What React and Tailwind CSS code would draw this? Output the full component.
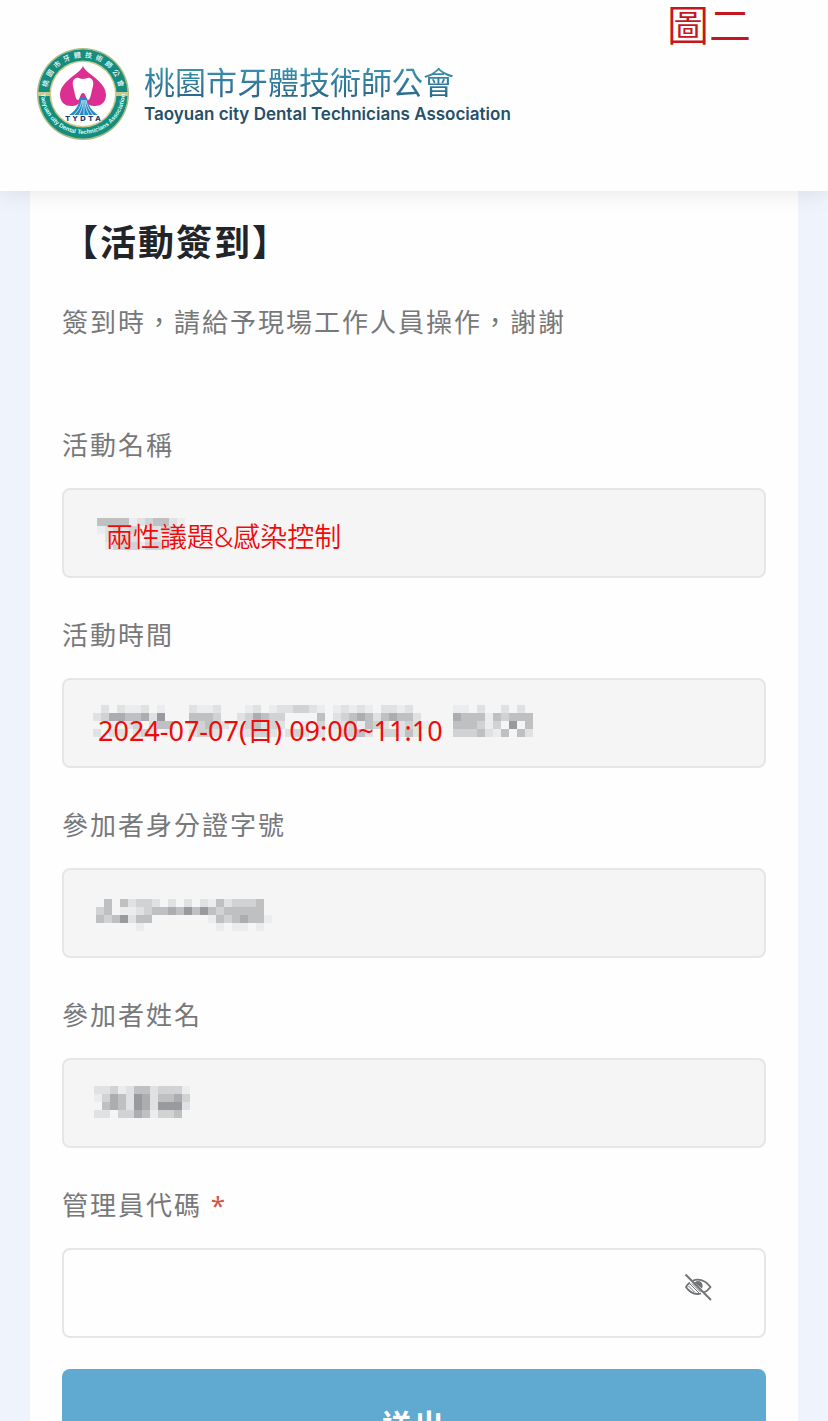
import { useId, useState } from 'react'

const fieldBox = 'relative flex h-[90px] w-full overflow-hidden rounded-lg border-2 border-[#e6e6e6]'
const labelBase = 'mb-[23px] block text-[26px] leading-10 tracking-[2px] text-[#77787a]'
const inputBase = 'relative h-full w-full bg-transparent text-[27px] text-[#f00a0a] focus:outline-none'

const tones = {
  a: '#ebeced',
  b: '#e0e1e2',
  c: '#d0d2d3',
  d: '#bec0c2',
  e: '#abadb0',
  f: '#989a9d',
}

const campos = [
  {
    label: '活動名稱',
    value: '兩性議題&感染控制',
    input: 'pt-1 pl-[42px] font-[350]',
    mask: 'left-[33px] top-7',
    rows: ['ddddabcddba', 'abcbc.bbccb', '.bbcb.bba..', '.acccaccba.'],
  },
  {
    label: '活動時間',
    value: '2024-07-07(日) 09:00~11:10',
    input: 'pt-3 pl-[34px]',
    mask: 'left-[29px] top-[25px]',
    rows: [
      '.b.baab.a...baab...ab.abbccba.ababa.bbab.....aa.b..b.b.',
      'bceeddebf...dddc..bcedcc....d.bcdedbdeddb....edddadcddd',
      '..a.bc.bdd..acdcb.acdbcb..a.c.bbcadcb.bcba...dddcac.f.d',
      'b.bb.bcb.a..bccb..abccb.bcb.b.accdb.ccbdb....cccdbad.db',
    ],
  },
  {
    label: '參加者身分證字號',
    value: '',
    input: 'pl-8',
    mask: 'left-8 top-[29px]',
    rows: ['.d.dbccb.b.b.badbcccd', 'cd.aabcddedfdfdcddddd', 'dcdfbdd.......adcdedda', '.....a.........a.aa.a'],
  },
  {
    label: '參加者姓名',
    value: '',
    input: 'pl-8',
    mask: 'left-[30px] top-[26px]',
    rows: ['bbcabddbccca', 'acedbfebddec', '.dedbfebfffb', 'bb.ccedaccd.'],
  },
]

function Mosaic({ rows, className }) {
  const cols = Math.max(...rows.map((r) => r.length))
  return (
    <svg
      aria-hidden="true"
      width={cols * 8}
      height={rows.length * 8}
      shapeRendering="crispEdges"
      className={`absolute ${className}`}
    >
      {rows.map((row, y) =>
        [...row].map((c, x) =>
          tones[c] ? <rect key={`${x}-${y}`} x={x * 8} y={y * 8} width="8" height="8" fill={tones[c]} /> : null,
        ),
      )}
    </svg>
  )
}

function Logo() {
  return (
    <svg viewBox="0 0 94 94" className="h-[94px] w-[94px] shrink-0" aria-hidden="true">
      <defs>
        <path id="arcTop" d="M10.5 47a36.5 36.5 0 0 1 73 0" />
        <path id="arcBottom" d="M5 45a42 42 0 0 0 84 0" />
      </defs>
      <circle cx="47" cy="47" r="46" fill="#a9bd85" />
      <circle cx="47" cy="47" r="44.5" fill="#168c7e" />
      <path d="M2 45h90v4H2z" fill="#c9c98d" />
      <circle cx="47" cy="47" r="33.5" fill="#c9c98d" />
      <circle cx="47" cy="47" r="32" fill="#fff" />
      <text fontSize="7" fontWeight="500" fill="#f0fbf6" fontFamily="Noto Sans CJK TC, sans-serif">
        <textPath href="#arcTop" startOffset="50%" textAnchor="middle">
          {[...'桃園市牙體技術師公會'].join('\u2002')}
        </textPath>
      </text>
      <text fontSize="6" fontWeight="700" fill="#d9fff3" fontFamily="Liberation Sans, sans-serif">
        <textPath href="#arcBottom" startOffset="50%" textAnchor="middle">
          Taoyuan city Dental Technicians Association
        </textPath>
      </text>
      <path
        d="M47 19c3 8 23 15 23 29 0 8-6 11-11 11-5 0-8-2-10-5h-4c-2 3-5 5-10 5-5 0-11-3-11-11 0-14 20-21 23-29z"
        fill="#dc2f93"
      />
      <path
        d="M40 31c3-1 4 1 7 1s4-2 7-1c5 2 3 8 2 12-1 5-2 10-4 10s-2-7-5-7-3 7-5 7-3-5-4-10c-1-4-3-10 2-12z"
        fill="#fff"
      />
      <path d="M44 51h7c1 8 5 13 11 17H33c6-4 10-9 11-17z" fill="#2489c4" />
      <path
        d="M46 53c-1 7-4 11-8 15M47 53c0 7-2 11-4 15M48 53v15M49 53c0 7 2 11 4 15M50 53c1 7 4 11 7 15"
        fill="none"
        stroke="#d6effa"
        strokeWidth="0.8"
      />
      <text
        x="47"
        y="74"
        textAnchor="middle"
        fontSize="7"
        fontWeight="700"
        fill="#233a70"
        fontFamily="DejaVu Sans, sans-serif"
      >
        T Y D T A
      </text>
    </svg>
  )
}

function EyeOff() {
  return (
    <svg width="28" height="28" viewBox="0 0 28 28" fill="none" stroke="#707274" strokeWidth="1.8" aria-hidden="true">
      <path d="M9 7.5c9-3 14 2 17.500 6.500-2 3-4 4.500-7 5.500" />
      <path d="M6 9.500C4 11 2.500 12.500 2 14c4 6 9 8 15 6.500" />
      <path d="M10.500 9.500c4-4 10 0 7.500 6z" fill="#707274" stroke="none" />
      <path d="M6 11l9 9M4.500 13l6.500 6.500M8 10.500l8.500 8.500" strokeWidth="1" />
      <path d="M1.500 1.500l25.500 25.500" strokeWidth="2" />
    </svg>
  )
}

function Campo({ label, value, input, mask, rows }) {
  const id = useId()
  return (
    <div>
      <label htmlFor={id} className={labelBase}>
        {label}
      </label>
      <div className={`${fieldBox} bg-[#f5f5f5]`}>
        <Mosaic rows={rows} className={mask} />
        <input id={id} readOnly value={value} className={`${inputBase} ${input}`} />
      </div>
    </div>
  )
}

export default function App() {
  const codeId = useId()
  const [code, setCode] = useState('')
  const [visible, setVisible] = useState(false)

  return (
    <div className="flex h-screen flex-col overflow-hidden bg-[#eff3fc] font-['Noto_Sans','Noto_Sans_CJK_TC',sans-serif]">
      <header className="relative z-10 flex h-[191px] shrink-0 items-start bg-[#fefefe] pt-[47px] pl-9 shadow-[0_0_24px_rgba(0,0,0,0.11)]">
        <Logo />
        <div className="ml-[14px] pt-[14px]">
          <p className="bg-linear-to-b from-[#3c9cb8] to-[#2b6285] bg-clip-text font-['Noto_Sans_CJK_TC',sans-serif] text-[31px] leading-10 text-transparent">
            桃園市牙體技術師公會
          </p>
          <p className="font-['Inter','Liberation_Sans',sans-serif] text-[17px] leading-[26px] font-semibold text-[#24506a]">
            Taoyuan city Dental Technicians Association
          </p>
        </div>
        <p className="absolute top-0 right-[77px] font-['Noto_Sans_CJK_TC',sans-serif] text-[42px] leading-[46px] font-[350] text-[#c4161c]">
          圖二
        </p>
      </header>

      <main className="mx-[30px] flex-1 bg-[#fefefe] px-8 pt-6">
        <h1 className="font-['Noto_Sans_CJK_TC',sans-serif] text-[36px] leading-[50px] font-bold tracking-[2px] text-[#212529]">
          【活動簽到】
        </h1>
        <p className="mt-9 font-['Noto_Sans_CJK_TC',sans-serif] text-[26px] leading-10 tracking-[2px] text-[#77787a]">
          簽到時，請給予現場工作人員操作，謝謝
        </p>

        <form className="mt-[84px] flex flex-col gap-[37px]" onSubmit={(e) => e.preventDefault()}>
          {campos.map((c) => (
            <Campo key={c.label} {...c} />
          ))}
          <div>
            <label htmlFor={codeId} className={labelBase}>
              管理員代碼 <span className="text-[#d0564c]">*</span>
            </label>
            <div className={`${fieldBox} bg-[#fefefe]`}>
              <input
                id={codeId}
                type={visible ? 'text' : 'password'}
                value={code}
                onChange={(e) => setCode(e.target.value)}
                className="h-full min-w-0 flex-1 pl-8 text-[26px] text-[#77787a] focus:outline-none"
              />
              <button
                type="button"
                aria-label="顯示代碼"
                onClick={() => setVisible(!visible)}
                className="pr-[52px] pb-3 pl-4"
              >
                <EyeOff />
              </button>
            </div>
            <button
              type="submit"
              className="mt-[31px] h-[110px] w-full rounded-lg bg-[#60a9d1] text-[30px] font-bold tracking-[2px] text-white"
            >
              送出
            </button>
          </div>
        </form>
      </main>
    </div>
  )
}
